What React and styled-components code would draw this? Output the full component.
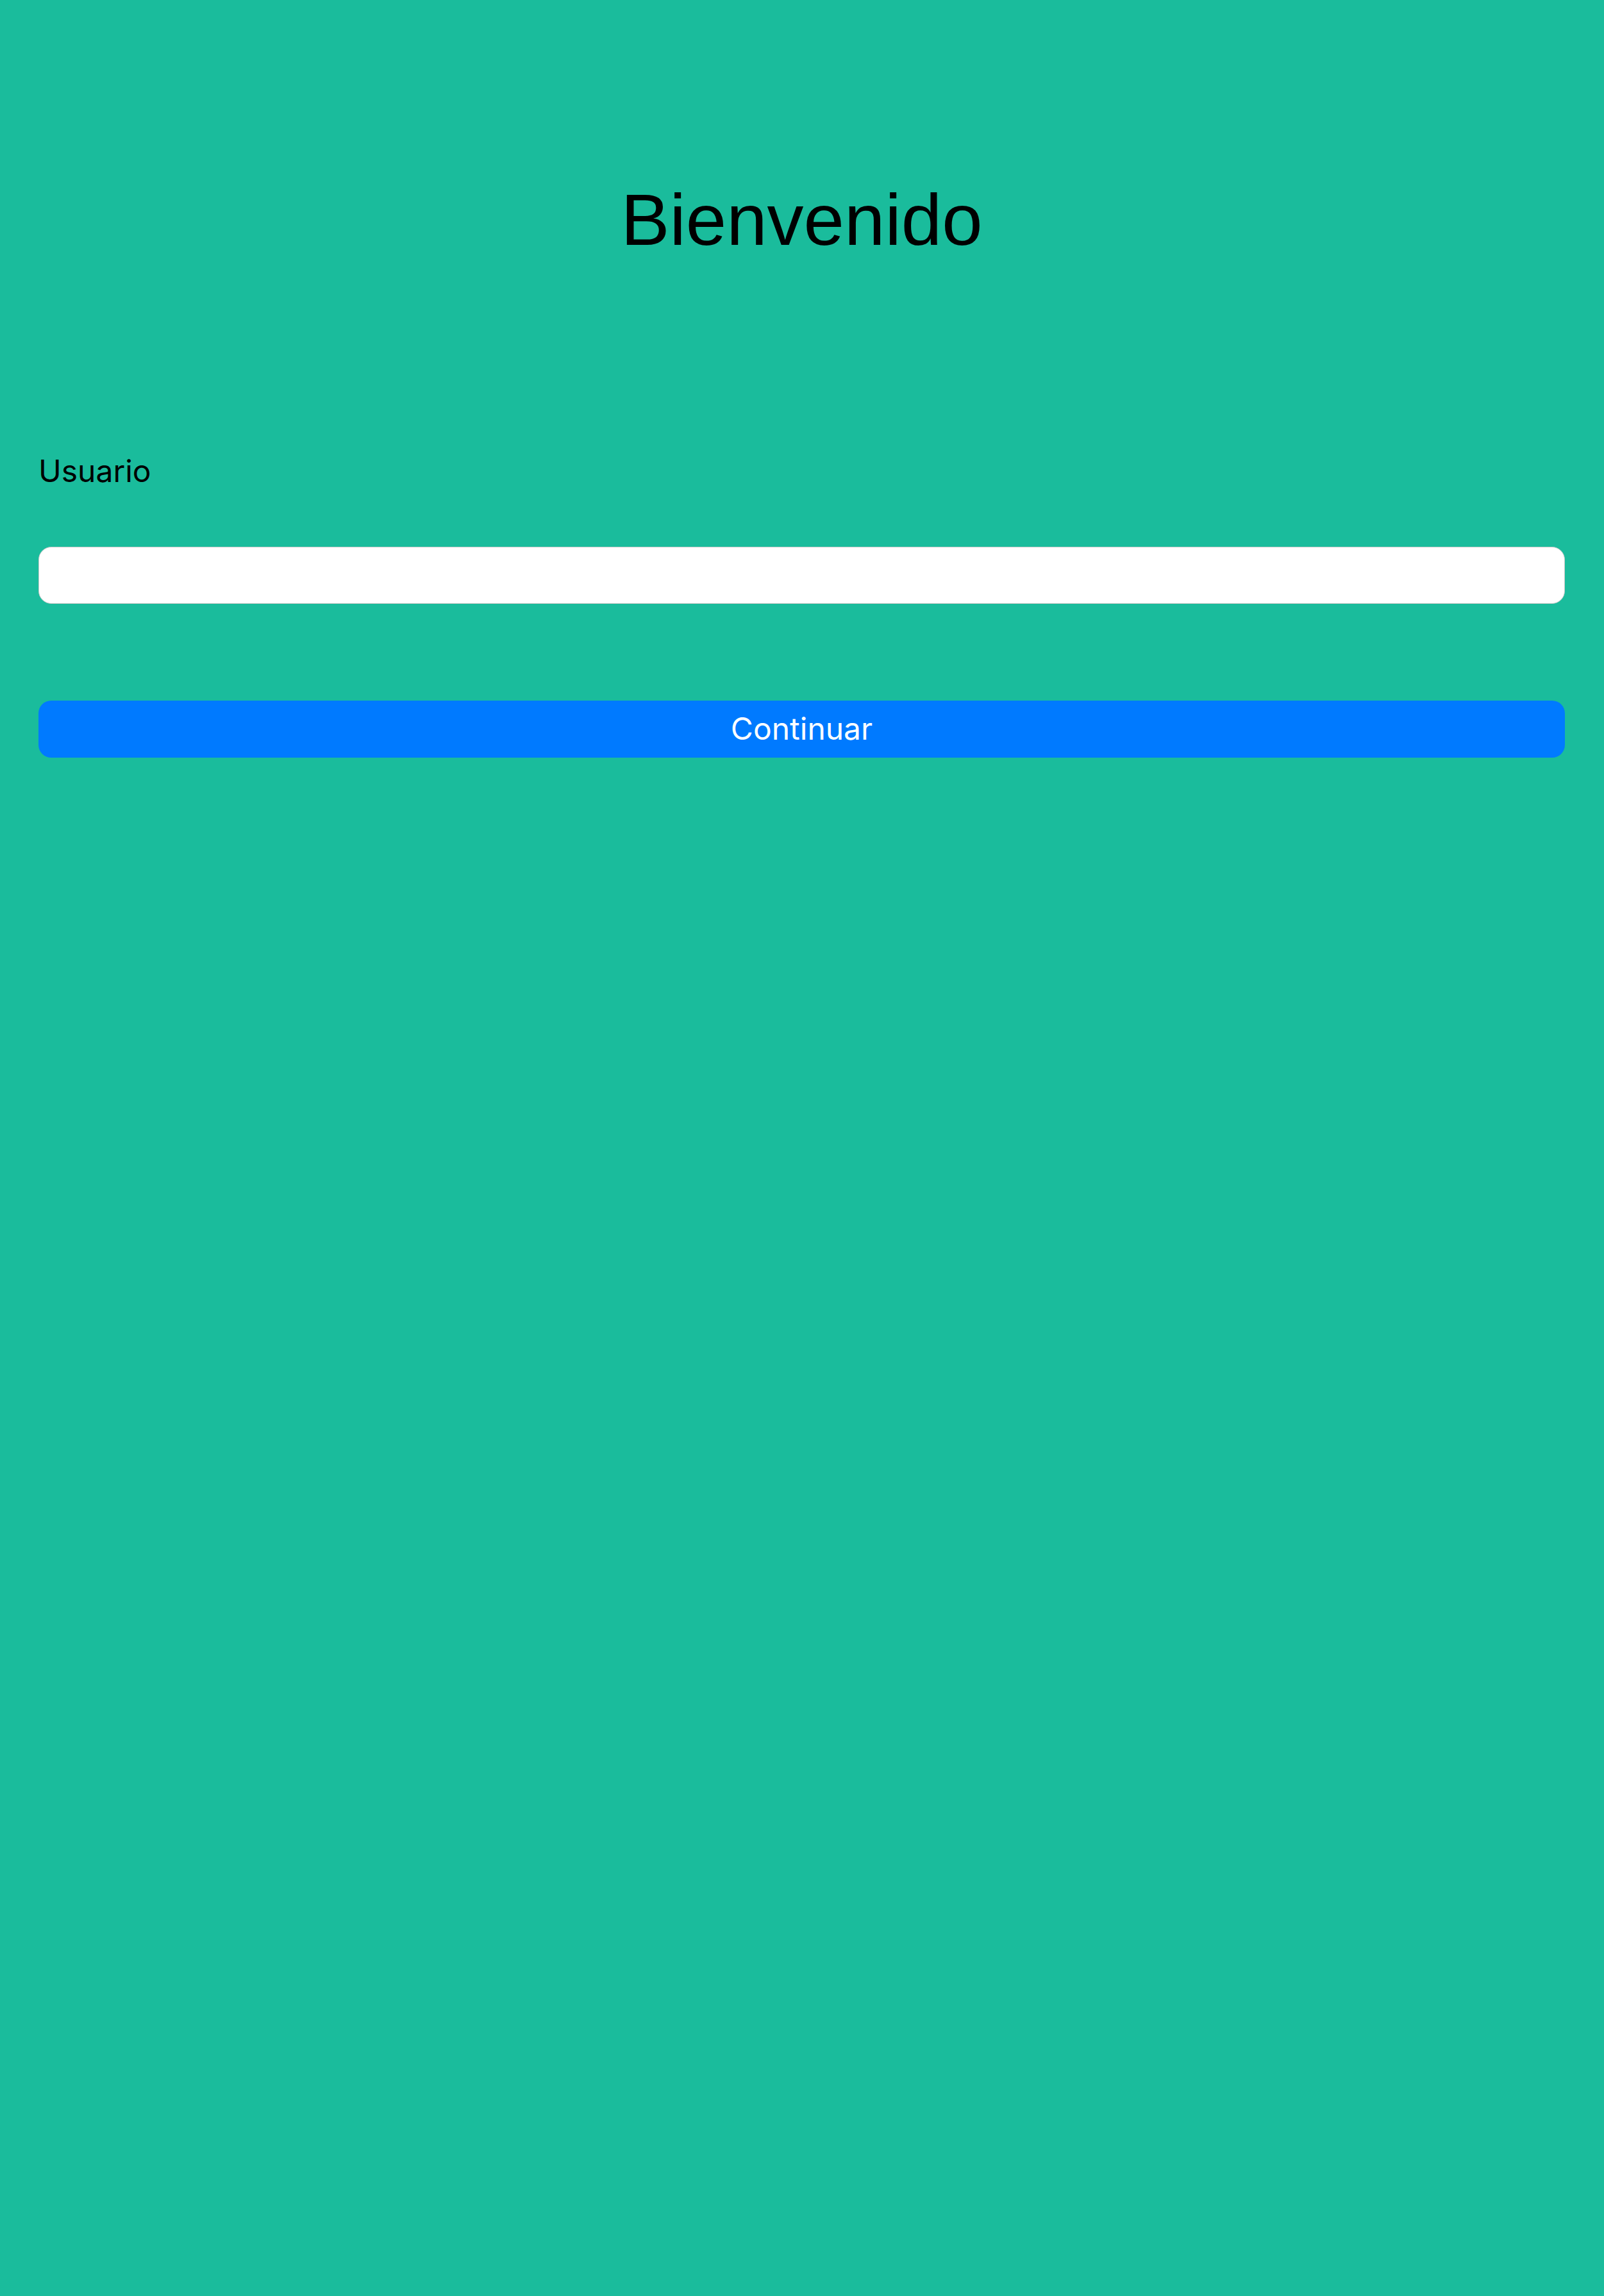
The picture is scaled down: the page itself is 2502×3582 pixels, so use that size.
import React from "react";
import styled, { createGlobalStyle } from "styled-components";

const GlobalStyle = createGlobalStyle`
  html, body {
    margin: 0;
    padding: 0;
    background-color: #1abc9c;
  }
  * {
    box-sizing: border-box;
  }
`;

const Page = styled.div`
  min-height: 3582px;
  background-color: #1abc9c;
  padding: 275px 61px 0 60px;
  display: flex;
  flex-direction: column;
`;

const Title = styled.h1`
  margin: 0;
  text-align: center;
  font-family: "Liberation Sans", Arial, sans-serif;
  font-weight: 400;
  font-size: 114px;
  line-height: 1.2;
  color: #000;
`;

const Form = styled.form`
  display: flex;
  flex-direction: column;
  margin-top: 293px;
`;

const Label = styled.label`
  font-family: "Inter", "Roboto", sans-serif;
  font-size: 48px;
  line-height: 60px;
  color: #000;
`;

const Input = styled.input`
  margin-top: 88px;
  height: 89px;
  width: 100%;
  background: #fff;
  border: 1px solid #c9c9c9;
  border-radius: 20px;
  padding: 0 24px;
  font-family: "Inter", sans-serif;
  font-size: 44px;
  outline: none;
`;

const Button = styled.button`
  margin-top: 151px;
  height: 89px;
  width: 100%;
  display: flex;
  align-items: center;
  justify-content: center;
  background-color: #007aff;
  color: #fff;
  border: none;
  border-radius: 20px;
  font-family: "Inter", "Roboto", sans-serif;
  font-size: 48px;
  line-height: 60px;
  cursor: pointer;
`;

export default function App() {
  return (
    <>
      <GlobalStyle />
      <Page>
        <Title>Bienvenido</Title>
        <Form onSubmit={e => e.preventDefault()}>
          <Label htmlFor="usuario">Usuario</Label>
          <Input id="usuario" type="text" />
          <Button type="submit">Continuar</Button>
        </Form>
      </Page>
    </>
  );
}
